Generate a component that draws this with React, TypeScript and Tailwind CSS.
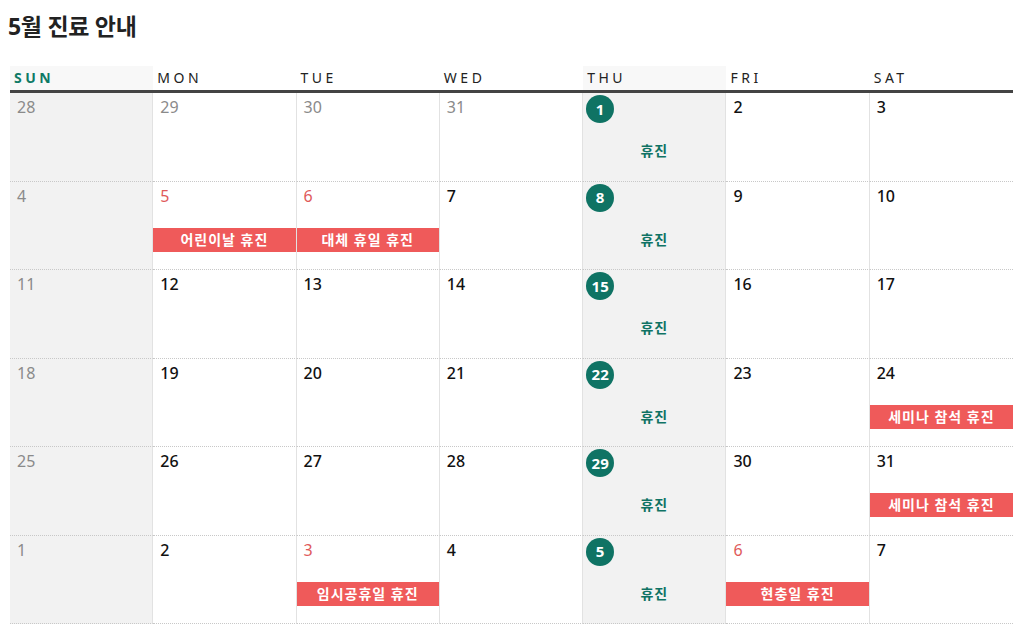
import React from "react";

type Cell = {
  d: number;
  tone: "gray" | "red" | "black" | "circle";
  label?: string;
  green?: boolean;
};

const rows: Cell[][] = [
  [
    { d: 28, tone: "gray" },
    { d: 29, tone: "gray" },
    { d: 30, tone: "gray" },
    { d: 31, tone: "gray" },
    { d: 1, tone: "circle", label: "휴진", green: true },
    { d: 2, tone: "black" },
    { d: 3, tone: "black" },
  ],
  [
    { d: 4, tone: "gray" },
    { d: 5, tone: "red", label: "어린이날 휴진" },
    { d: 6, tone: "red", label: "대체 휴일 휴진" },
    { d: 7, tone: "black" },
    { d: 8, tone: "circle", label: "휴진", green: true },
    { d: 9, tone: "black" },
    { d: 10, tone: "black" },
  ],
  [
    { d: 11, tone: "gray" },
    { d: 12, tone: "black" },
    { d: 13, tone: "black" },
    { d: 14, tone: "black" },
    { d: 15, tone: "circle", label: "휴진", green: true },
    { d: 16, tone: "black" },
    { d: 17, tone: "black" },
  ],
  [
    { d: 18, tone: "gray" },
    { d: 19, tone: "black" },
    { d: 20, tone: "black" },
    { d: 21, tone: "black" },
    { d: 22, tone: "circle", label: "휴진", green: true },
    { d: 23, tone: "black" },
    { d: 24, tone: "black", label: "세미나 참석 휴진" },
  ],
  [
    { d: 25, tone: "gray" },
    { d: 26, tone: "black" },
    { d: 27, tone: "black" },
    { d: 28, tone: "black" },
    { d: 29, tone: "circle", label: "휴진", green: true },
    { d: 30, tone: "black" },
    { d: 31, tone: "black", label: "세미나 참석 휴진" },
  ],
  [
    { d: 1, tone: "gray" },
    { d: 2, tone: "black" },
    { d: 3, tone: "red", label: "임시공휴일 휴진" },
    { d: 4, tone: "black" },
    { d: 5, tone: "circle", label: "휴진", green: true },
    { d: 6, tone: "red", label: "현충일 휴진" },
    { d: 7, tone: "black" },
  ],
];

const days = ["SUN", "MON", "TUE", "WED", "THU", "FRI", "SAT"];

const font = {
  fontFamily: '"Noto Sans", "Noto Sans CJK KR", sans-serif',
};

export default function App() {
  return (
    <div className="w-[1024px] h-[637px] bg-white overflow-hidden" style={font}>
      <div className="pl-[8px] pt-[10px] h-[66px]">
        <h1 className="text-[23px] leading-[32px] font-bold text-[#222] tracking-[-0.3px]">
          5월 진료 안내
        </h1>
      </div>
      <div className="ml-[10px] w-[1003px]">
        <div className="grid grid-cols-7 border-b-[3px] border-[#444]">
          {days.map((d, i) => (
            <div
              key={d}
              className={`h-[24px] pl-[4px] text-[14px] leading-[24px] tracking-[3.5px] ${
                i === 0
                  ? "bg-[#f8f8f8] text-[#0f7a66] font-bold"
                  : i === 4
                  ? "bg-[#f8f8f8] text-[#222]"
                  : "text-[#222]"
              }`}
            >
              {d}
            </div>
          ))}
        </div>
        {rows.map((row, ri) => (
          <div key={ri} className="grid grid-cols-7 h-[88.5px]">
            {row.map((c, ci) => (
              <div
                key={ci}
                className={`relative flex flex-col border-b border-dotted border-[#c8c8c8] ${
                  ci < 6 ? "border-r border-r-[#e2e2e2]" : ""
                } ${ci === 0 || ci === 4 ? "bg-[#f2f2f2]" : "bg-white"}`}
                style={ci < 6 ? { borderRightStyle: "solid" } : undefined}
              >
                <div className="h-[30px] flex items-start">
                  {c.tone === "circle" ? (
                    <div className="ml-[3px] mt-[2px] w-[28px] h-[28px] rounded-full bg-[#0f7364] text-white text-[15px] font-bold flex items-center justify-center">
                      {c.d}
                    </div>
                  ) : (
                    <span
                      className={`pl-[7px] pt-[2px] text-[16px] leading-[24px] ${
                        c.tone === "gray"
                          ? "text-[#8a8a8a]"
                          : c.tone === "red"
                          ? "text-[#e05a5a]"
                          : "text-[#111] font-medium"
                      }`}
                    >
                      {c.d}
                    </span>
                  )}
                </div>
                {c.label &&
                  (c.green ? (
                    <div className="mt-[16px] h-[24px] text-center text-[14px] leading-[24px] font-bold text-[#0f7364] tracking-[1px]">
                      {c.label}
                    </div>
                  ) : (
                    <div className="mt-[16px] h-[24px] bg-[#ef5a5a] text-white text-center text-[14px] leading-[24px] font-bold tracking-[1px]">
                      {c.label}
                    </div>
                  ))}
              </div>
            ))}
          </div>
        ))}
      </div>
    </div>
  );
}
